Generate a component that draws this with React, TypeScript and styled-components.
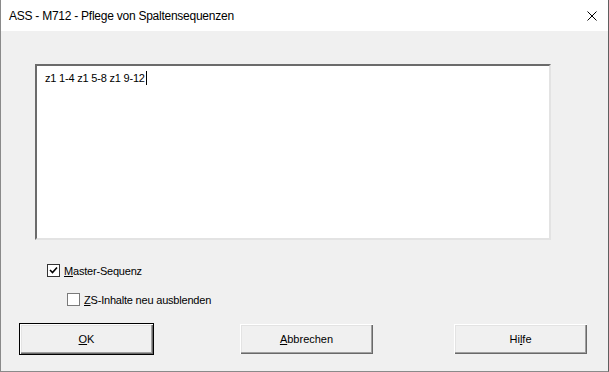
import React from 'react'
import { styled, createGlobalStyle } from 'styled-components'

const GlobalStyle = createGlobalStyle`
  html, body {
    margin: 0;
    padding: 0;
    background: #f0f0f0;
  }
  * {
    box-sizing: border-box;
  }
`

const Window = styled.div`
  width: 609px;
  height: 372px;
  display: flex;
  flex-direction: column;
  background: #f0f0f0;
  border-left: 1px solid #8a8a8a;
  border-right: 1px solid #5f5f5f;
  border-bottom: 1px solid #8a8a8a;
  font-family: "Liberation Sans", Arial, sans-serif;
  color: #000;
  overflow: hidden;
`

const TitleBar = styled.div`
  height: 31px;
  flex-shrink: 0;
  display: flex;
  align-items: center;
  justify-content: space-between;
  background: #fff;
  padding: 1px 10px 0 8px;
`

const Title = styled.span`
  font-family: "Liberation Sans", Arial, sans-serif;
  font-size: 12px;
  letter-spacing: -0.25px;
  color: #000;
`

const CloseIcon = styled.svg`
  width: 10px;
  height: 10px;
  margin-right: 1px;
`

const Body = styled.div`
  flex: 1;
  display: flex;
  flex-direction: column;
  padding: 33px 0 0 0;
`

const SequenceField = styled.div`
  width: 516px;
  height: 176px;
  margin-left: 34px;
  background: #fff;
  border-top: 2px solid #6b6b6b;
  border-left: 2px solid #6b6b6b;
  border-right: 2px solid #e3e3e3;
  border-bottom: 2px solid #e3e3e3;
  padding: 5px 0 0 8px;
  font-size: 11px;
  line-height: 14px;
  letter-spacing: -0.2px;
  display: flex;
  align-items: flex-start;
`

const Caret = styled.span`
  display: inline-block;
  width: 1px;
  height: 14px;
  background: #000;
  margin-left: 1px;
`

const Options = styled.div`
  display: flex;
  flex-direction: column;
  gap: 16px;
  margin-top: 24px;
`

const CheckRow = styled.label<{ $indent: number }>`
  display: flex;
  align-items: center;
  gap: 4px;
  padding-left: ${p => p.$indent}px;
  font-size: 11px;
  letter-spacing: -0.2px;
  height: 13px;
`

const Box = styled.span<{ $dark?: boolean }>`
  width: 13px;
  height: 13px;
  flex-shrink: 0;
  background: #fff;
  border: 1px solid ${p => (p.$dark ? '#333' : '#7a7a7a')};
  display: flex;
  align-items: center;
  justify-content: center;
`

const Mn = styled.span`
  text-decoration: underline;
`

const ButtonRow = styled.div`
  display: flex;
  margin-top: 17px;
  padding-left: 18px;
`

const Button = styled.div<{ $default?: boolean; $space?: number }>`
  width: 135px;
  height: 32px;
  margin-left: ${p => p.$space ?? 0}px;
  display: flex;
  align-items: center;
  justify-content: center;
  font-size: 11px;
  background: #f0f0f0;
  border: 1px solid ${p => (p.$default ? '#000' : 'transparent')};
  box-shadow:
    inset 1px 1px 0 #fff,
    inset -1px -1px 0 #696969,
    inset -2px -2px 0 #a0a0a0,
    inset 2px 2px 0 #e3e3e3;
`

function Check({ checked, dark }: { checked?: boolean; dark?: boolean }) {
  return (
    <Box $dark={dark}>
      {checked && (
        <svg width="9" height="9" viewBox="0 0 9 9">
          <path d="M1 4 L3.5 6.5 L8 1.5" fill="none" stroke="#000" strokeWidth="1.6" />
        </svg>
      )}
    </Box>
  )
}

export default function App() {
  return (
    <>
      <GlobalStyle />
      <Window>
        <TitleBar>
          <Title>ASS - M712 - Pflege von Spaltensequenzen</Title>
          <CloseIcon viewBox="0 0 10 10">
            <path d="M0.5 0.5 L9.5 9.5 M9.5 0.5 L0.5 9.5" stroke="#000" strokeWidth="1" />
          </CloseIcon>
        </TitleBar>
        <Body>
          <SequenceField>
            z1 1-4 z1 5-8 z1 9-12<Caret />
          </SequenceField>
          <Options>
            <CheckRow $indent={46}>
              <Check checked dark />
              <span><Mn>M</Mn>aster-Sequenz</span>
            </CheckRow>
            <CheckRow $indent={66}>
              <Check />
              <span><Mn>Z</Mn>S-Inhalte neu ausblenden</span>
            </CheckRow>
          </Options>
          <ButtonRow>
            <Button $default><span><Mn>O</Mn>K</span></Button>
            <Button $space={85}><span><Mn>A</Mn>bbrechen</span></Button>
            <Button $space={79}><span>Hi<Mn>l</Mn>fe</span></Button>
          </ButtonRow>
        </Body>
      </Window>
    </>
  )
}
